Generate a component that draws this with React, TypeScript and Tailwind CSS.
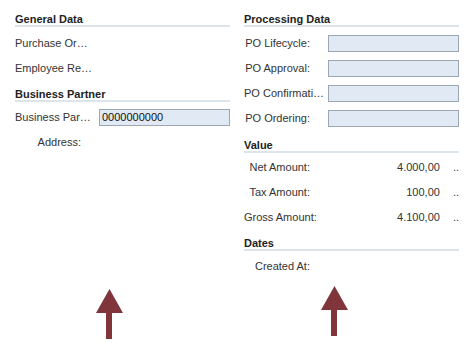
const Heading = ({ text, className = "" }: { text: string; className?: string }) => (
  <div className={`border-b-2 border-[#dce4ec] text-[11px] font-bold leading-[12px] text-[#222] ${className}`}>
    {text}
  </div>
)

const Label = ({ text, cut = false }: { text: string; cut?: boolean }) => (
  <span
    className={
      cut
        ? "w-[76px] shrink-0 whitespace-nowrap text-left"
        : "w-[76px] shrink-0 whitespace-nowrap pr-[10px] text-right"
    }
  >
    {text}
  </span>
)

const Field = ({ value = "" }: { value?: string }) => (
  <div className="ml-[8px] h-[17px] w-[131px] border border-[#9ba7b3] bg-[#e1eaf4] pl-[2px] leading-[15px] text-[#111]">
    {value}
  </div>
)

const Row = ({ children }: { children: React.ReactNode }) => (
  <div className="flex h-[25px] items-center">{children}</div>
)

const Arrow = ({ className }: { className: string }) => (
  <svg className={`absolute ${className}`} width="27" height="50" viewBox="0 0 27 50">
    <polygon points="13.5,0 27,24 16,24 16,50 10,50 10,24 0,24" fill="#7f3539" />
  </svg>
)

const Amount = ({ label, value }: { label: string; value: string }) => (
  <Row>
    <Label text={label} />
    <span className="ml-[8px] w-[112px] text-right">{value}</span>
    <span className="ml-[13px]">..</span>
  </Row>
)

export default function App() {
  return (
    <div className="relative flex h-[350px] w-[474px] gap-[14px] bg-white pl-[15px] pt-[13px] font-['Liberation_Sans',Arial,sans-serif] text-[11px] text-[#333]">
      <div className="w-[215px]">
        <Heading text="General Data" />
        <div className="mt-[4px]">
          <Row>
            <Label text="Purchase Or…" cut />
          </Row>
          <Row>
            <Label text="Employee Re…" cut />
          </Row>
        </div>
        <Heading text="Business Partner" className="mt-[7px]" />
        <div className="mt-[3px]">
          <Row>
            <Label text="Business Par…" cut />
            <Field value="0000000000" />
          </Row>
          <Row>
            <Label text="Address:" />
          </Row>
        </div>
      </div>

      <div className="w-[215px]">
        <Heading text="Processing Data" />
        <div className="mt-[4px]">
          <Row>
            <Label text="PO Lifecycle:" />
            <Field />
          </Row>
          <Row>
            <Label text="PO Approval:" />
            <Field />
          </Row>
          <Row>
            <Label text="PO Confirmati…" cut />
            <Field />
          </Row>
          <Row>
            <Label text="PO Ordering:" />
            <Field />
          </Row>
        </div>
        <Heading text="Value" className="mt-[8px]" />
        <div className="mt-[2px]">
          <Amount label="Net Amount:" value="4.000,00" />
          <Amount label="Tax Amount:" value="100,00" />
          <Amount label="Gross Amount:" value="4.100,00" />
        </div>
        <Heading text="Dates" className="mt-[7px]" />
        <div className="mt-[3px]">
          <Row>
            <Label text="Created At:" />
          </Row>
        </div>
      </div>

      <Arrow className="left-[96px] top-[289px]" />
      <Arrow className="left-[321px] top-[286px]" />
    </div>
  )
}
